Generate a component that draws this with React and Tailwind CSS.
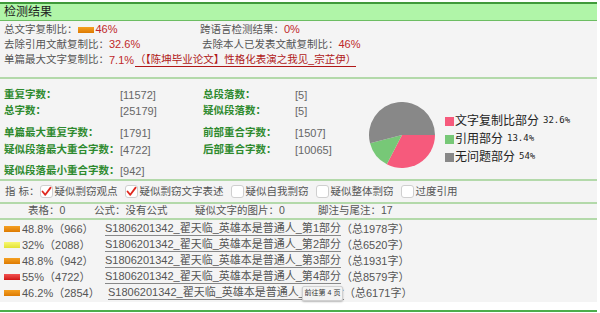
import React from "react";

const font = { fontFamily: '"Liberation Sans", "Noto Sans CJK SC", sans-serif' };

function Bar({ color }) {
  return <span className={`inline-block shrink-0 w-[16px] h-[6px] mr-[2px] ${color}`} />;
}

function Check({ checked, label }) {
  return (
    <span className="flex items-center mr-[8px] whitespace-nowrap">
      <span className="w-[13px] h-[13px] rounded-[3px] border border-[#cfcfcf] bg-white flex items-center justify-center mr-[1px]">
        {checked && (
          <svg width="11" height="11" viewBox="0 0 11 11">
            <path d="M1.5 5.5 L4.3 8.8 L9.6 1.6" fill="none" stroke="#e0281e" strokeWidth="1.8" strokeLinecap="round" strokeLinejoin="round" />
          </svg>
        )}
      </span>
      <span>{label}</span>
    </span>
  );
}

function Pie() {
  const cx = 34, cy = 33, r = 33;
  const pt = (deg) => {
    const a = (deg * Math.PI) / 180;
    return `${(cx + r * Math.cos(a)).toFixed(2)} ${(cy + r * Math.sin(a)).toFixed(2)}`;
  };
  const slice = (a0, a1) => `M${cx} ${cy} L${pt(a0)} A${r} ${r} 0 ${a1 - a0 > 180 ? 1 : 0} 1 ${pt(a1)} Z`;
  return (
    <svg width="68" height="67" viewBox="0 0 68 67">
      <path d={slice(0, 117.4)} fill="#f65a7c" />
      <path d={slice(117.4, 165.6)} fill="#77c877" />
      <path d={slice(165.6, 360)} fill="#888888" />
    </svg>
  );
}

const stats = [
  ["重复字数：", "[11572]", "总段落数：", "[5]", "h-[16px] mt-[8px]"],
  ["总字数：", "[25179]", "疑似段落数：", "[5]", "h-[16px]"],
  ["单篇最大重复字数：", "[1791]", "前部重合字数：", "[1507]", "h-[16px] mt-[6px]"],
  ["疑似段落最大重合字数：", "[4722]", "后部重合字数：", "[10065]", "h-[16px] mt-[1px]"],
  ["疑似段落最小重合字数：", "[942]", "", "", "h-[16px] mt-[5px]"],
];

const parts = [
  ["bg-gradient-to-b from-[#f5a020] to-[#dd7a00]", "48.8%（966）", 1, "1978"],
  ["bg-gradient-to-b from-[#f8f870] to-[#e2e230]", "32%（2088）", 2, "6520"],
  ["bg-gradient-to-b from-[#f5a020] to-[#dd7a00]", "48.8%（942）", 3, "1931"],
  ["bg-gradient-to-b from-[#f25050] to-[#d01010]", "55%（4722）", 4, "8579"],
  ["bg-gradient-to-b from-[#f5a020] to-[#dd7a00]", "46.2%（2854）", 5, "6171"],
];

export default function App() {
  return (
    <div className="w-[600px] h-[313px] bg-white pt-[2px] text-[10.5px] text-[#555] whitespace-nowrap" style={font}>
      <div className="w-[597px] h-[19px] bg-[#b0f5a8] border-t-2 border-b border-t-[#3f9a3a] border-b-[#6cbd62] flex items-center pl-[4px] text-[12px] text-[#222]">
        检测结果
      </div>
      <div className="w-[597px] bg-[#f4f4f4]">
        <div className="pl-[4px] pt-[1px] pb-[9px]">
          <div className="h-[15px] flex items-center">
            <div className="w-[196px] flex items-center">
              <span>总文字复制比：</span>
              <Bar color="bg-gradient-to-b from-[#f5a020] to-[#dd7a00]" />
              <span className="text-[#c0282a] text-[11px]">46%</span>
            </div>
            <span>跨语言检测结果：</span>
            <span className="text-[#c0282a] text-[11px]">0%</span>
          </div>
          <div className="h-[15px] flex items-center">
            <div className="w-[198px] flex items-center">
              <span>去除引用文献复制比：</span>
              <span className="text-[#c0282a] text-[11px]">32.6%</span>
            </div>
            <span>去除本人已发表文献复制比：</span>
            <span className="text-[#c0282a] text-[11px]">46%</span>
          </div>
          <div className="h-[16px] flex items-center">
            <span>单篇最大文字复制比：</span>
            <span className="text-[#c0282a] text-[11px] mr-[1px]">7.1%</span>
            <span className="text-[#b01818] border-b border-[#b01818] leading-[13px]">（【陈坤毕业论文】性格化表演之我见_宗芷伊）</span>
          </div>
        </div>
        <div className="h-[2px] bg-[#b3d9aa]" />
        <div className="flex h-[100px]">
          <div className="w-[368px] pl-[4px] text-[#2e8a2e]">
            {stats.map(([a, b, c, d, cls]) => (
              <div key={a} className={`flex items-center ${cls}`}>
                <span className="min-w-[116px] shrink-0 font-bold">{a}</span>
                <span className="flex-1 max-w-[83px] text-[#666] text-[11px]">{b}</span>
                <span className="w-[92px] shrink-0 font-bold">{c}</span>
                <span className="text-[#666] text-[11px]">{d}</span>
              </div>
            ))}
          </div>
          <div className="pt-[23px]">
            <Pie />
          </div>
          <div className="pl-[9px] pt-[33px] text-[#222] text-[12px]">
            {[
              ["bg-[#f65a7c]", "文字复制比部分", "32.6%"],
              ["bg-[#77c877]", "引用部分", "13.4%"],
              ["bg-[#888888]", "无问题部分", "54%"],
            ].map(([c, t, v]) => (
              <div key={t} className="flex items-center h-[18px]">
                <span className={`w-[9px] h-[9px] mr-[1px] ${c}`} />
                <span>{t}</span>
                <span className="ml-[4px] text-[9px]" style={{ fontFamily: '"DejaVu Sans Mono", monospace' }}>{v}</span>
              </div>
            ))}
          </div>
        </div>
        <div className="h-[2px] bg-[#b3d9aa]" />
        <div className="h-[21px] flex items-center pl-[5px]">
          <span className="mr-[1px]">指 标：</span>
          <Check checked label="疑似剽窃观点" />
          <Check checked label="疑似剽窃文字表述" />
          <Check label="疑似自我剽窃" />
          <Check label="疑似整体剽窃" />
          <Check label="过度引用" />
        </div>
        <div className="h-[2px] bg-[#b3d9aa]" />
        <div className="h-[14px] flex items-center pl-[28px]">
          <span className="w-[66px]">表格：0</span>
          <span className="w-[101px]">公式：没有公式</span>
          <span className="w-[123px]">疑似文字的图片：0</span>
          <span>脚注与尾注：17</span>
        </div>
        <div className="h-[2px] bg-[#b3d9aa]" />
        <div className="relative pl-[4px] pt-[1px] pb-[1px] text-[11px]">
          {parts.map(([c, p, n, t]) => (
            <div key={n} className="h-[16px] flex items-center">
              <Bar color={c} />
              <span className={n === 5 ? "w-[86px]" : "w-[83px]"}>{p}</span>
              <span className="border-b border-[#888] leading-[13px]">S1806201342_翟天临_英雄本是普通人_第{n}部分</span>
              <span>（总{t}字）</span>
            </div>
          ))}
          <div className="absolute left-[302px] top-[66px] w-[41px] h-[15px] bg-[#f3f3f3] border border-[#d0d0d0] rounded-[2px] shadow-[0_1px_2px_rgba(0,0,0,0.25)] flex items-center justify-center text-[7px] text-[#333]">
            前往第 4 页
          </div>
        </div>
      </div>
      <div className="w-[597px] h-[2px] mt-[8px] bg-[#4cae4c]" />
    </div>
  );
}
